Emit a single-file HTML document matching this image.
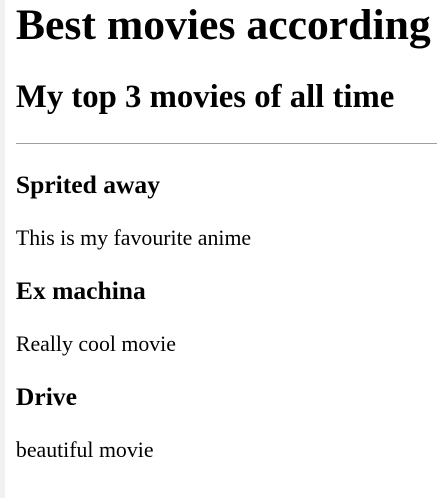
<!DOCTYPE html>
<html><head><meta charset="utf-8"><style>
html,body{margin:0;padding:0;background:#fff;}
html{border-left:5px solid #f1f1f1;height:498px;box-sizing:border-box;overflow:hidden;width:437px;}
body{zoom:1.365;margin:0 0 0 8px;font-family:"Liberation Serif",serif;color:#000;overflow:hidden;}
h1{margin:0 0 .67em;white-space:nowrap;font-size:2em;overflow:hidden;}
h2{font-size:1.5em;margin:.83em 0;white-space:nowrap;}
h3{font-size:1.17em;margin:1em 0;}
p{margin:1em 0;}
hr{border:0;border-top:1px solid #a0a0a0;margin:.5em 0;}
</style></head><body>
<h1>Best movies according to me</h1>
<h2>My top 3 movies of all time</h2>
<hr>
<h3>Sprited away</h3>
<p>This is my favourite anime</p>
<h3>Ex machina</h3>
<p>Really cool movie</p>
<h3>Drive</h3>
<p>beautiful movie</p>
</body></html>
